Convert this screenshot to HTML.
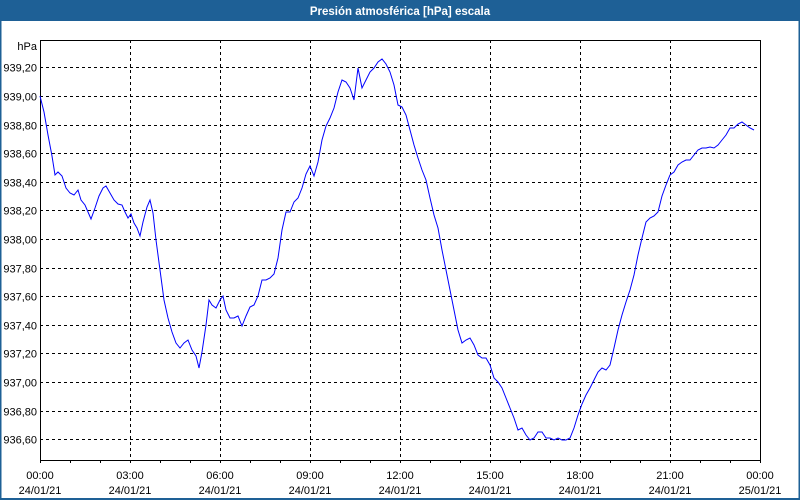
<!DOCTYPE html>
<html><head><meta charset="utf-8"><style>
body{margin:0;width:800px;height:500px;overflow:hidden;background:#fff;font-family:"Liberation Sans",sans-serif}
</style></head><body>
<svg width="800" height="500" xmlns="http://www.w3.org/2000/svg" style="display:block">
<rect x="0" y="0" width="800" height="500" fill="#fff"/>
<rect x="0" y="0" width="800" height="21" fill="#1e6096"/>
<rect x="0" y="0" width="1.5" height="500" fill="#1e6096"/>
<rect x="798.5" y="0" width="1.5" height="500" fill="#1e6096"/>
<rect x="0" y="498" width="800" height="2" fill="#1e6096"/>
<text x="400" y="15" fill="#fff" font-size="11.5" font-weight="bold" text-anchor="middle" font-family="Liberation Sans, sans-serif">Presión atmosférica [hPa] escala</text>
<g stroke="#000" stroke-width="1" stroke-dasharray="3,3" fill="none">
<line x1="40" y1="67.5" x2="760" y2="67.5"/><line x1="40" y1="96.5" x2="760" y2="96.5"/><line x1="40" y1="125.5" x2="760" y2="125.5"/><line x1="40" y1="153.5" x2="760" y2="153.5"/><line x1="40" y1="182.5" x2="760" y2="182.5"/><line x1="40" y1="210.5" x2="760" y2="210.5"/><line x1="40" y1="239.5" x2="760" y2="239.5"/><line x1="40" y1="268.5" x2="760" y2="268.5"/><line x1="40" y1="296.5" x2="760" y2="296.5"/><line x1="40" y1="325.5" x2="760" y2="325.5"/><line x1="40" y1="353.5" x2="760" y2="353.5"/><line x1="40" y1="382.5" x2="760" y2="382.5"/><line x1="40" y1="411.5" x2="760" y2="411.5"/><line x1="40" y1="439.5" x2="760" y2="439.5"/>
<line x1="130.5" y1="40" x2="130.5" y2="460"/><line x1="220.5" y1="40" x2="220.5" y2="460"/><line x1="310.5" y1="40" x2="310.5" y2="460"/><line x1="400.5" y1="40" x2="400.5" y2="460"/><line x1="490.5" y1="40" x2="490.5" y2="460"/><line x1="580.5" y1="40" x2="580.5" y2="460"/><line x1="670.5" y1="40" x2="670.5" y2="460"/>
</g>
<rect x="40.5" y="40.5" width="720" height="420" fill="none" stroke="#000" stroke-width="1"/>
<g stroke="#000" stroke-width="1">
<line x1="70.5" y1="460" x2="70.5" y2="463"/><line x1="100.5" y1="460" x2="100.5" y2="463"/><line x1="130.5" y1="460" x2="130.5" y2="463"/><line x1="160.5" y1="460" x2="160.5" y2="463"/><line x1="190.5" y1="460" x2="190.5" y2="463"/><line x1="220.5" y1="460" x2="220.5" y2="463"/><line x1="250.5" y1="460" x2="250.5" y2="463"/><line x1="280.5" y1="460" x2="280.5" y2="463"/><line x1="310.5" y1="460" x2="310.5" y2="463"/><line x1="340.5" y1="460" x2="340.5" y2="463"/><line x1="370.5" y1="460" x2="370.5" y2="463"/><line x1="400.5" y1="460" x2="400.5" y2="463"/><line x1="430.5" y1="460" x2="430.5" y2="463"/><line x1="460.5" y1="460" x2="460.5" y2="463"/><line x1="490.5" y1="460" x2="490.5" y2="463"/><line x1="520.5" y1="460" x2="520.5" y2="463"/><line x1="550.5" y1="460" x2="550.5" y2="463"/><line x1="580.5" y1="460" x2="580.5" y2="463"/><line x1="610.5" y1="460" x2="610.5" y2="463"/><line x1="640.5" y1="460" x2="640.5" y2="463"/><line x1="670.5" y1="460" x2="670.5" y2="463"/><line x1="700.5" y1="460" x2="700.5" y2="463"/><line x1="730.5" y1="460" x2="730.5" y2="463"/><line x1="40.5" y1="460" x2="40.5" y2="463"/><line x1="760.5" y1="460" x2="760.5" y2="463"/>
</g>
<g font-size="11" fill="#000" text-anchor="end" font-family="Liberation Sans, sans-serif">
<text x="37" y="50">hPa</text>
<text x="37" y="71.5">939,20</text><text x="37" y="100.5">939,00</text><text x="37" y="129.5">938,80</text><text x="37" y="157.5">938,60</text><text x="37" y="186.5">938,40</text><text x="37" y="214.5">938,20</text><text x="37" y="243.5">938,00</text><text x="37" y="272.5">937,80</text><text x="37" y="300.5">937,60</text><text x="37" y="329.5">937,40</text><text x="37" y="357.5">937,20</text><text x="37" y="386.5">937,00</text><text x="37" y="415.5">936,80</text><text x="37" y="443.5">936,60</text>
</g>
<g font-size="11" fill="#000" text-anchor="middle" font-family="Liberation Sans, sans-serif">
<text x="40" y="479">00:00</text><text x="40" y="494">24/01/21</text>
<text x="130" y="479">03:00</text><text x="130" y="494">24/01/21</text>
<text x="220" y="479">06:00</text><text x="220" y="494">24/01/21</text>
<text x="310" y="479">09:00</text><text x="310" y="494">24/01/21</text>
<text x="400" y="479">12:00</text><text x="400" y="494">24/01/21</text>
<text x="490" y="479">15:00</text><text x="490" y="494">24/01/21</text>
<text x="580" y="479">18:00</text><text x="580" y="494">24/01/21</text>
<text x="670" y="479">21:00</text><text x="670" y="494">24/01/21</text>
<text x="760" y="479">00:00</text><text x="760" y="494">25/01/21</text>
</g>
<polyline fill="none" stroke="#0000ff" stroke-width="1" points="40,96 44,112 48,135 52,156 55,175 58,172 62,176 66,188 70,193 74,195 78,190 81,200 85,205 88,212 91,219 95,208 99,196 103,188 106,186 110,193 114,200 118,204 122,205 125,212 128,218 131,214 134,223 137,228 140,236 143,222 147,207 150,200 153,213 156,240 160,270 164,300 168,318 172,332 176,343 180,348 184,343 188,340 192,350 196,356 199,368 202,352 206,325 209,300 212,305 216,308 220,300 223,296 226,310 230,318 234,318 238,316 242,326 246,316 250,307 254,305 258,296 262,280 266,280 270,278 274,274 278,258 282,230 286,212 290,212 294,202 298,198 302,188 306,174 310,166 314,176 318,162 322,140 326,126 330,118 334,108 338,92 342,80 346,82 350,88 354,100 358,68 362,88 366,80 370,72 374,68 378,62 382,59 386,64 390,72 394,85 398,105 402,107 406,115 410,130 414,145 418,158 422,170 426,180 430,198 434,215 438,228 442,250 446,270 450,290 454,310 458,330 462,343 466,340 470,338 474,345 478,355 482,358 486,358 490,365 494,378 498,382 502,388 506,398 510,408 514,418 518,430 522,428 526,435 530,440 534,438 538,432 542,432 546,438 550,438 554,440 558,438 562,440 566,440 570,438 574,428 578,415 582,404 586,395 590,388 594,380 598,372 602,368 606,370 610,365 614,348 618,330 622,315 626,302 630,290 634,275 638,255 642,238 646,222 650,218 654,216 658,212 662,196 666,185 670,175 674,172 678,165 682,162 686,160 690,160 694,155 698,150 702,148 706,148 710,147 714,148 718,145 722,140 726,135 730,128 734,128 738,124 742,122 746,125 750,128 754,130"/>
</svg>
</body></html>
